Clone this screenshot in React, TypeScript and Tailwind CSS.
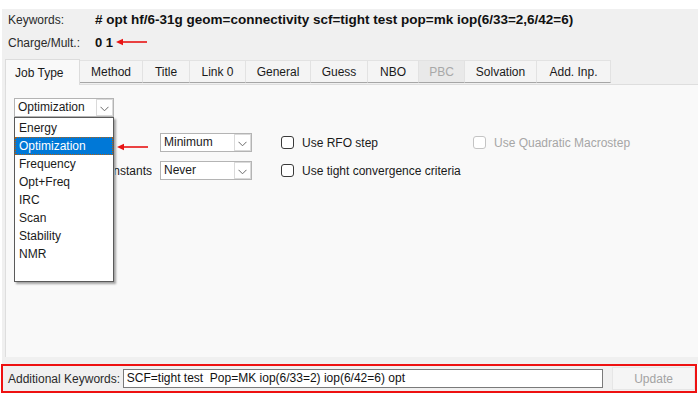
import React from "react";

const Chevron = () => (
  <svg width="9" height="6" viewBox="0 0 9 6" className="block">
    <path d="M0.5 0.8 L4.5 4.8 L8.5 0.8" fill="none" stroke="#6a6a6a" strokeWidth="1" />
  </svg>
);

const Combo = ({ value, w }: { value: string; w: string }) => (
  <div className={`${w} h-[19px] flex bg-white border border-[#b4b4b4]`}>
    <div className="flex-1 pl-[3px] leading-[17px] text-[12px] text-[#1a1a1a] whitespace-nowrap overflow-hidden">{value}</div>
    <div className="w-[17px] h-full border border-[#dadada] bg-white flex items-end justify-center pb-[3px]">
      <Chevron />
    </div>
  </div>
);

const Check = ({ label, disabled }: { label: string; disabled?: boolean }) => (
  <div className="flex items-center">
    <div className={`w-[13px] h-[13px] rounded-[3px] border bg-white ${disabled ? "border-[#c4c4c4]" : "border-[#3a3a3a]"}`} />
    <span className={`ml-[8px] text-[12px] whitespace-nowrap ${disabled ? "text-[#a6a6a6]" : "text-[#1a1a1a]"}`}>{label}</span>
  </div>
);

const RedArrow = ({ className }: { className: string }) => (
  <svg width="32" height="8" viewBox="0 0 32 8" className={className}>
    <line x1="5" y1="4" x2="31" y2="4" stroke="#e81414" strokeWidth="1.6" />
    <path d="M0 4 L7 0.8 L7 7.2 Z" fill="#e81414" />
  </svg>
);

const tabs: { label: string; w: string; disabled?: boolean }[] = [
  { label: "Method", w: "w-[63px]" },
  { label: "Title", w: "w-[47px]" },
  { label: "Link 0", w: "w-[56px]" },
  { label: "General", w: "w-[65px]" },
  { label: "Guess", w: "w-[57px]" },
  { label: "NBO", w: "w-[51px]" },
  { label: "PBC", w: "w-[46px]", disabled: true },
  { label: "Solvation", w: "w-[72px]" },
  { label: "Add. Inp.", w: "w-[74px]" },
];

const items = ["Energy", "Optimization", "Frequency", "Opt+Freq", "IRC", "Scan", "Stability", "NMR"];

export default function App() {
  return (
    <div
      className="relative w-[698px] h-[406px] bg-white overflow-hidden text-[12px] text-[#1a1a1a]"
      style={{ fontFamily: '"Liberation Sans", Arial, sans-serif' }}
    >
      <div className="h-[9px]" />
      {/* window */}
      <div className="ml-[2px] w-[696px] h-[355px] bg-[#f0f0f0] flex flex-col">
        {/* header */}
        <div className="h-[49px] pl-[6px] pt-[2px] flex flex-col">
          <div className="h-[18px] flex items-center">
            <span className="w-[87px] text-[#2a2a2a]">Keywords:</span>
            <span className="font-bold text-[13.5px] text-[#111] whitespace-nowrap">
              # opt hf/6-31g geom=connectivity scf=tight test pop=mk iop(6/33=2,6/42=6)
            </span>
          </div>
          <div className="h-[5px]" />
          <div className="h-[18px] flex items-center">
            <span className="w-[87px] text-[#2a2a2a]">Charge/Mult.:</span>
            <span className="font-bold text-[13px] text-[#111]">0 1</span>
          </div>
        </div>
        {/* tabs */}
        <div className="h-[26px] flex items-end pl-[3px]">
          <div className="w-[75px] h-[26px] bg-[#f9f9f9] border-l border-t border-r border-[#dcdcdc] flex items-center pl-[9px] text-[#1a1a1a] relative z-10 -mb-px">
            Job Type
          </div>
          {tabs.map((t) => (
            <div
              key={t.label}
              className={`${t.w} h-[23px] mb-[1px] border-t border-r border-[#e2e2e2] border-b border-b-[#a6a6a6] flex items-center justify-center ${
                t.disabled ? "bg-[#e9e9e9] text-[#a8a8a8]" : "bg-[#f4f4f4] text-[#1a1a1a]"
              }`}
            >
              {t.label}
            </div>
          ))}
        </div>
        {/* panel */}
        <div className="ml-[3px] h-[273px] bg-[#f9f9f9] border-l border-t border-[#dedede] pt-[13px] pl-[8px] flex flex-col">
          <Combo value="Optimization" w="w-[100px]" />
          <div className="h-[16px]" />
          <div className="h-[19px] flex items-center">
            <div className="ml-[4px] w-[134px]" />
            <div className="ml-[8px]"><Combo value="Minimum" w="w-[92px]" /></div>
            <div className="ml-[29px] w-[192px]"><Check label="Use RFO step" /></div>
            <Check label="Use Quadratic Macrostep" disabled />
          </div>
          <div className="h-[9px]" />
          <div className="h-[19px] flex items-center">
            <div className="ml-[4px] w-[134px] flex justify-end">
              <div className="w-[37px] flex justify-end overflow-hidden whitespace-nowrap text-[#1a1a1a]">Calculate Force Constants</div>
            </div>
            <div className="ml-[8px]"><Combo value="Never" w="w-[92px]" /></div>
            <div className="ml-[29px]"><Check label="Use tight convergence criteria" /></div>
          </div>
        </div>
      </div>
      {/* additional keywords */}
      <div className="ml-[1px] w-[696px] h-[29px] bg-[#f0f0f0] border-2 border-[#ee1111] flex items-center">
        <span className="ml-[5px] w-[115px] text-[#2a2a2a] whitespace-nowrap">Additional Keywords:</span>
        <div className="w-[481px] h-[19px] bg-white border border-[#7a7a7a] pl-[3px] leading-[17px] whitespace-nowrap overflow-hidden text-[#111]">
          SCF=tight test&nbsp; Pop=MK iop(6/33=2) iop(6/42=6) opt
        </div>
        <div className="ml-[9px] w-[83px] h-[23px] bg-[#f5f5f5] border border-[#e6e6e6] flex items-center justify-center text-[#a3a3a3]">
          Update
        </div>
      </div>

      {/* dropdown list overlay */}
      <div className="absolute left-[14px] top-[117px] w-[100px] h-[165px] bg-white border border-[#5a5a5a] shadow-[2px_2px_2px_rgba(0,0,0,0.35)] pt-[1px]">
        {items.map((it) => (
          <div
            key={it}
            className={`h-[18px] leading-[16px] pl-[3px] whitespace-nowrap ${
              it === "Optimization"
                ? "bg-[#0078d7] text-white border border-dotted border-[#b06010]"
                : "text-[#1a1a1a] border border-transparent"
            }`}
          >
            {it}
          </div>
        ))}
      </div>

      {/* annotations */}
      <RedArrow className="absolute left-[116px] top-[38px]" />
      <RedArrow className="absolute left-[117px] top-[143px]" />
    </div>
  );
}
